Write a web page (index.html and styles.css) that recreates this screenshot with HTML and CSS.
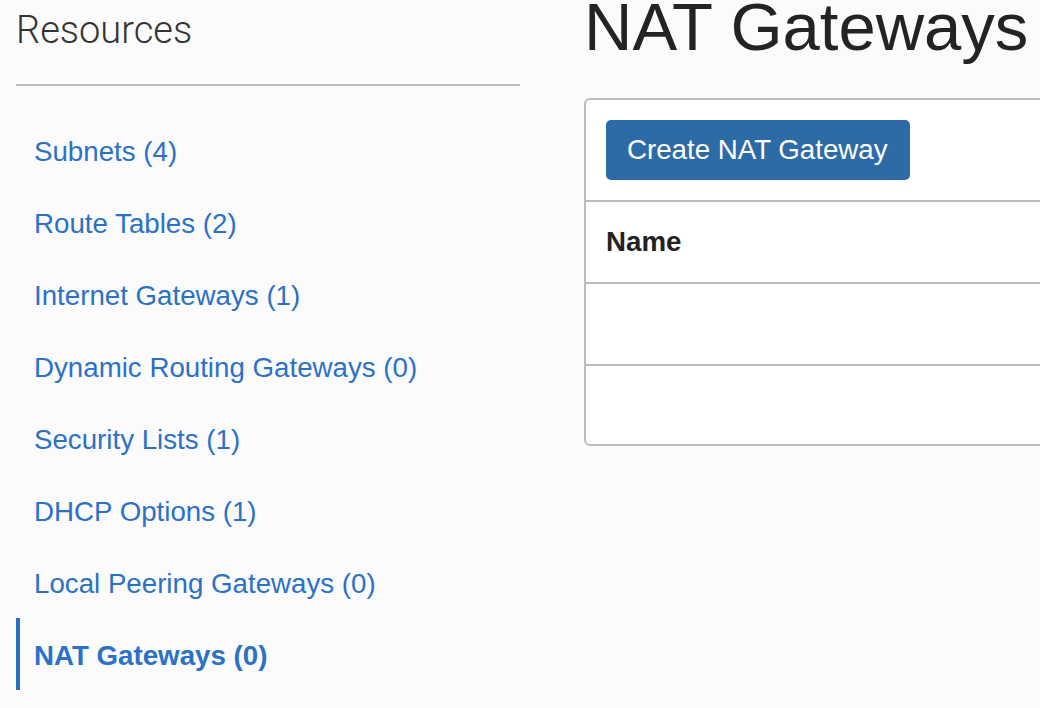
FILE: index.html
```html
<!DOCTYPE html>
<html lang="en">
<head>
<meta charset="utf-8">
<title>NAT Gateways</title>
<link rel="stylesheet" href="styles.css">
</head>
<body>
<div class="page">
  <aside class="sidebar">
    <h2 class="sidebar-title">Resources</h2>
    <nav class="nav">
      <a class="nav-item" href="#">Subnets (4)</a>
      <a class="nav-item" href="#">Route Tables (2)</a>
      <a class="nav-item" href="#">Internet Gateways (1)</a>
      <a class="nav-item" href="#">Dynamic Routing Gateways (0)</a>
      <a class="nav-item" href="#">Security Lists (1)</a>
      <a class="nav-item" href="#">DHCP Options (1)</a>
      <a class="nav-item" href="#">Local Peering Gateways (0)</a>
      <a class="nav-item active" href="#">NAT Gateways (0)</a>
    </nav>
  </aside>
  <main class="main">
    <h1 class="title">NAT Gateways</h1>
    <section class="panel">
      <div class="toolbar">
        <button class="btn" type="button">Create NAT Gateway</button>
      </div>
      <div class="row header">Name</div>
      <div class="row"></div>
      <div class="row"></div>
    </section>
  </main>
</div>
</body>
</html>
```
FILE: styles.css
```css
html, body {
  margin: 0;
  padding: 0;
  overflow: hidden;
  background: #fbfbfb;
}
body {
  font-family: "Liberation Sans", Arial, sans-serif;
  width: 1040px;
  height: 708px;
}
.page {
  display: flex;
  align-items: flex-start;
}
.sidebar {
  width: 504px;
  padding-left: 16px;
  flex-shrink: 0;
}
.sidebar-title {
  margin: 0;
  font-family: Roboto, "Liberation Sans", sans-serif;
  font-weight: 300;
  font-size: 38px;
  line-height: 60px;
  color: #333;
  padding-bottom: 24px;
  border-bottom: 2px solid #b9bcc1;
}
.nav {
  display: flex;
  flex-direction: column;
  margin-top: 28px;
}
.nav-item {
  display: block;
  height: 72px;
  line-height: 75px;
  font-size: 27.7px;
  color: #2b71c6;
  text-decoration: none;
  border-left: 4px solid transparent;
  padding-left: 14px;
}
.nav-item.active {
  font-weight: bold;
  border-left-color: #2b6fc4;
}
.main {
  margin-left: 64px;
  flex-shrink: 0;
}
.title {
  margin: 0 0 44px 0;
  font-size: 67px;
  font-weight: normal;
  line-height: 54px;
  color: #232323;
  white-space: nowrap;
}
.panel {
  width: 600px;
  background: #fff;
  border: 2px solid #b9bcc1;
  border-radius: 6px;
}
.toolbar {
  padding: 20px;
}
.btn {
  display: block;
  width: 304px;
  height: 60px;
  padding: 0 0 0 21px;
  text-align: left;
  border: 0;
  border-radius: 5px;
  background: #2d6ba7;
  color: #fff;
  font-family: "Liberation Sans", Arial, sans-serif;
  font-size: 27.7px;
  line-height: 60px;
}
.row {
  border-top: 2px solid #b9bcc1;
  height: 80px;
  line-height: 80px;
  padding-left: 20px;
  font-size: 27.7px;
  color: #222;
}
.row:last-child {
  height: 78px;
}
.row.header {
  font-weight: bold;
}
```
